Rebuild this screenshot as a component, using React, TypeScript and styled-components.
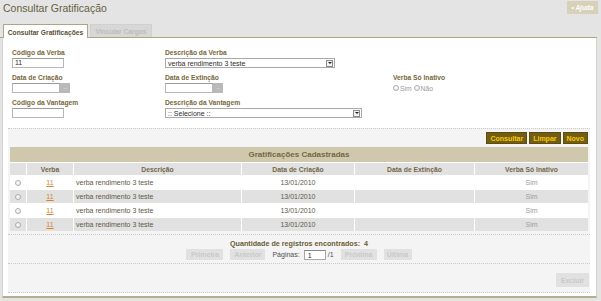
import React from "react";
import styled, { createGlobalStyle } from "styled-components";

const GlobalStyle = createGlobalStyle`
  html, body { margin: 0; padding: 0; background: #e4e4e4; }
  body { font-family: "Liberation Sans", Arial, sans-serif; }
  * { box-sizing: border-box; }
`;

const Page = styled.div`
  width: 601px;
  height: 301px;
  overflow: hidden;
  display: flex;
  flex-direction: column;
  background: #e4e4e4;
`;

const TopBar = styled.div`
  height: 24px;
  display: flex;
  justify-content: space-between;
  align-items: flex-start;
  padding: 0 3px 0 3px;
`;

const Title = styled.div`
  font-size: 10.5px;
  line-height: 14px;
  margin-top: 1px;
  color: #675f42;
`;

const HelpButton = styled.div`
  margin-top: 1px;
  width: 31px;
  height: 13px;
  background: #d6d1b8;
  color: #fff;
  font-size: 6.5px;
  font-weight: bold;
  font-style: italic;
  display: flex;
  align-items: center;
  justify-content: center;
`;

const TabBar = styled.div`
  height: 14px;
  display: flex;
  align-items: flex-end;
  gap: 2px;
  padding-left: 3px;
  margin-right: 4px;
  border-bottom: 1px solid #aca682;
`;

const Tab = styled.div<{ $active?: boolean }>`
  height: ${(p) => (p.$active ? 14 : 13)}px;
  width: ${(p) => (p.$active ? 85 : 62)}px;
  margin-bottom: ${(p) => (p.$active ? -1 : 0)}px;
  background: ${(p) => (p.$active ? "#fff" : "#d7d7d7")};
  border: 1px solid ${(p) => (p.$active ? "#aca682" : "#d0d0d0")};
  border-bottom: none;
  color: ${(p) => (p.$active ? "#5a5030" : "#bcbcbc")};
  font-size: 6.7px;
  font-weight: bold;
  display: flex;
  align-items: center;
  justify-content: center;
  padding-top: 1px;
`;

const Panel = styled.div`
  flex: 1;
  margin: 0 4px 3px 2px;
  background: #fff;
  border-left: 1px solid #d4d4d4;
  border-right: 1px solid #d4d4d4;
  border-bottom: 2px solid #b3ae90;
  display: flex;
  flex-direction: column;
`;

const FormGrid = styled.div`
  display: grid;
  grid-template-columns: 153px 228px 1fr;
  row-gap: 4px;
  padding: 9px 0 10px 9px;
`;

const Field = styled.div`
  display: flex;
  flex-direction: column;
  height: 21px;
`;

const Label = styled.div`
  height: 11px;
  line-height: 11px;
  font-size: 6.7px;
  font-weight: bold;
  color: #76673a;
  white-space: nowrap;
`;

const TextBox = styled.div<{ $w: number }>`
  width: ${(p) => p.$w}px;
  height: 10px;
  border: 1px solid #b7b7b7;
  border-top-color: #9a9a9a;
  background: #fff;
  font-size: 7px;
  line-height: 8px;
  padding-left: 2px;
  color: #2c2c2c;
`;

const DateWrap = styled.div`
  display: flex;
  align-items: stretch;
  height: 10px;
`;

const DotsButton = styled.div`
  width: 10px;
  height: 10px;
  background: #b9b9b9;
  color: #eee;
  font-size: 6px;
  line-height: 8px;
  text-align: center;
  letter-spacing: -0.5px;
`;

const SelectBox = styled.div<{ $w: number }>`
  width: ${(p) => p.$w}px;
  height: 10px;
  border: 1px solid #a8a8a8;
  background: #fff;
  display: flex;
  align-items: center;
  justify-content: space-between;
  padding: 0 1px 0 2px;
  font-size: 7px;
  color: #2c2c2c;
`;

const SelectArrow = styled.div`
  width: 7px;
  height: 7px;
  border: 1px solid #8a8a8a;
  background: #f2f2f2;
  display: flex;
  align-items: center;
  justify-content: center;
  &::after {
    content: "";
    border-left: 2px solid transparent;
    border-right: 2px solid transparent;
    border-top: 2px solid #222;
  }
`;

const RadioRow = styled.div`
  display: flex;
  align-items: center;
  height: 10px;
  font-size: 6.8px;
  color: #9a9a9a;
`;

const Radio = styled.span`
  display: inline-block;
  width: 6px;
  height: 6px;
  border-radius: 50%;
  border: 1px solid #aeaeae;
  background: radial-gradient(circle at 40% 40%, #fff, #e3e3e3);
  margin-right: 1px;
`;

const LowerArea = styled.div`
  margin: 0 6px 0 5px;
  display: flex;
  flex-direction: column;
`;

const Section = styled.div<{ $bottom?: boolean }>`
  background: #f4f4f4;
  border-top: 1px dotted #c9c9c9;
  ${(p) => (p.$bottom ? "border-bottom: 1px dotted #c9c9c9;" : "")}
`;

const ActionsRow = styled.div`
  height: 18px;
  display: flex;
  justify-content: flex-end;
  align-items: flex-start;
  gap: 2px;
  padding: 3px 2px 0 0;
`;

const ActionButton = styled.div`
  height: 12px;
  padding: 0 3px;
  background: #715d14;
  border: 1px solid #5e4d10;
  color: #fcc800;
  font-size: 7px;
  font-weight: bold;
  display: flex;
  align-items: center;
`;

const Table = styled.div`
  margin: 0 2px 3px 2px;
  background: #fff;
  display: flex;
  flex-direction: column;
  gap: 1px;
`;

const TableCaption = styled.div`
  height: 15px;
  background: #cfc8ad;
  color: #74673e;
  font-size: 8px;
  font-weight: bold;
  display: flex;
  align-items: center;
  justify-content: center;
`;

const GridRow = styled.div<{ $h: number }>`
  display: grid;
  grid-template-columns: 16px 46px 167px 112px 119px 1fr;
  column-gap: 1px;
  height: ${(p) => p.$h}px;
`;

const HeadCell = styled.div`
  background: #e1e1e1;
  color: #72674a;
  font-size: 6.8px;
  font-weight: bold;
  display: flex;
  align-items: center;
  justify-content: center;
`;

const Cell = styled.div<{ $alt?: boolean; $align?: string; $muted?: boolean }>`
  background: ${(p) => (p.$alt ? "#e1e1e1" : "#fff")};
  color: ${(p) => (p.$muted ? "#9c9c9c" : "#5f584a")};
  font-size: 7px;
  display: flex;
  align-items: center;
  justify-content: ${(p) => p.$align || "center"};
  padding-left: ${(p) => (p.$align === "flex-start" ? "2px" : "0")};
`;

const CodeLink = styled.span`
  color: #d5832e;
  text-decoration: underline;
`;

const PagerSection = styled.div`
  padding: 4px 0 3px 0;
  display: flex;
  flex-direction: column;
  align-items: center;
`;

const Count = styled.div`
  height: 10px;
  line-height: 10px;
  font-size: 7.2px;
  font-weight: bold;
  color: #6a5d34;
  white-space: pre;
`;

const Pager = styled.div`
  height: 11px;
  display: flex;
  align-items: center;
  gap: 7px;
  font-size: 7px;
  color: #4f4f4f;
`;

const DisabledButton = styled.div<{ $w?: number; $h?: number }>`
  height: ${(p) => p.$h || 11}px;
  ${(p) => (p.$w ? `width: ${p.$w}px;` : "padding: 0 4px;")}
  background: #e1e1e1;
  color: #c9c9c9;
  font-size: 7px;
  font-weight: bold;
  display: flex;
  align-items: center;
  justify-content: center;
`;

const PageInput = styled.div`
  width: 22px;
  height: 10px;
  background: #fff;
  border: 1px solid #a8a8a8;
  border-top-color: #888;
  font-size: 7px;
  line-height: 9px;
  padding-left: 3px;
  color: #222;
  margin-left: -3px;
`;

const PageTotal = styled.span`
  margin-left: -5px;
`;

const FooterRow = styled.div`
  height: 28px;
  display: flex;
  justify-content: flex-end;
  align-items: flex-start;
  padding: 9px 1px 0 0;
`;

const rows = [0, 1, 2, 3];

export default function App() {
  return (
    <Page>
      <GlobalStyle />
      <TopBar>
        <Title>Consultar Gratificação</Title>
        <HelpButton>• Ajuda</HelpButton>
      </TopBar>
      <TabBar>
        <Tab $active>Consultar Gratificações</Tab>
        <Tab>Vincular Cargos</Tab>
      </TabBar>
      <Panel>
        <FormGrid>
          <Field>
            <Label>Código da Verba</Label>
            <TextBox $w={52}>11</TextBox>
          </Field>
          <Field>
            <Label>Descrição da Verba</Label>
            <SelectBox $w={170}>
              <span>verba rendimento 3 teste</span>
              <SelectArrow />
            </SelectBox>
          </Field>
          <div />
          <Field>
            <Label>Data de Criação</Label>
            <DateWrap>
              <TextBox $w={48} />
              <DotsButton>...</DotsButton>
            </DateWrap>
          </Field>
          <Field>
            <Label>Data de Extinção</Label>
            <DateWrap>
              <TextBox $w={48} />
              <DotsButton>...</DotsButton>
            </DateWrap>
          </Field>
          <Field>
            <Label>Verba Só Inativo</Label>
            <RadioRow>
              <Radio />
              Sim&nbsp;
              <Radio />
              Não
            </RadioRow>
          </Field>
          <Field>
            <Label>Código da Vantagem</Label>
            <TextBox $w={52} />
          </Field>
          <Field>
            <Label>Descrição da Vantagem</Label>
            <SelectBox $w={197}>
              <span>:: Selecione ::</span>
              <SelectArrow />
            </SelectBox>
          </Field>
          <div />
        </FormGrid>
        <LowerArea>
          <Section>
            <ActionsRow>
              <ActionButton>Consultar</ActionButton>
              <ActionButton>Limpar</ActionButton>
              <ActionButton>Novo</ActionButton>
            </ActionsRow>
            <Table>
              <TableCaption>Gratificações Cadastradas</TableCaption>
              <GridRow $h={12}>
                <HeadCell />
                <HeadCell>Verba</HeadCell>
                <HeadCell>Descrição</HeadCell>
                <HeadCell>Data de Criação</HeadCell>
                <HeadCell>Data de Extinção</HeadCell>
                <HeadCell>Verba Só Inativo</HeadCell>
              </GridRow>
              {rows.map((i) => {
                const alt = i % 2 === 1;
                return (
                  <GridRow $h={13} key={i}>
                    <Cell $alt={alt}>
                      <Radio />
                    </Cell>
                    <Cell $alt={alt}>
                      <CodeLink>11</CodeLink>
                    </Cell>
                    <Cell $alt={alt} $align="flex-start">
                      verba rendimento 3 teste
                    </Cell>
                    <Cell $alt={alt}>13/01/2010</Cell>
                    <Cell $alt={alt} />
                    <Cell $alt={alt} $muted>
                      Sim
                    </Cell>
                  </GridRow>
                );
              })}
            </Table>
          </Section>
          <Section>
            <PagerSection>
              <Count>Quantidade de registros encontrados:  4</Count>
              <Pager>
                <DisabledButton $w={37}>Primeira</DisabledButton>
                <DisabledButton $w={35}>Anterior</DisabledButton>
                <span>Páginas:</span>
                <PageInput>1</PageInput>
                <PageTotal>/1</PageTotal>
                <DisabledButton $w={36}>Próxima</DisabledButton>
                <DisabledButton $w={28}>Última</DisabledButton>
              </Pager>
            </PagerSection>
          </Section>
          <Section $bottom>
            <FooterRow>
              <DisabledButton $w={33} $h={14}>
                Excluir
              </DisabledButton>
            </FooterRow>
          </Section>
        </LowerArea>
      </Panel>
    </Page>
  );
}
